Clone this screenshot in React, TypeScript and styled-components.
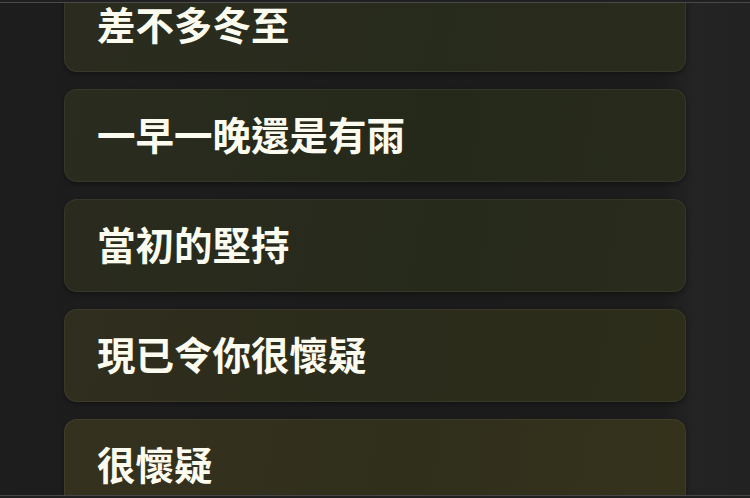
import React from 'react';
import styled, { createGlobalStyle } from 'styled-components';

const GlobalStyle = createGlobalStyle`
  html, body {
    margin: 0;
    padding: 0;
    background: #1c1c1c;
  }
  * {
    box-sizing: border-box;
  }
`;

type Tone = 'olive' | 'green' | 'moss' | 'khaki' | 'brown';

const tones: Record<Tone, string> = {
  olive: 'linear-gradient(100deg, #2b2c1f 0%, #272b1c 60%, #292b1d 100%)',
  green: 'linear-gradient(100deg, #292c1e 0%, #25291a 60%, #282b1c 100%)',
  moss: 'linear-gradient(100deg, #2a2b1e 0%, #262a1b 60%, #292b1c 100%)',
  khaki: 'linear-gradient(100deg, #302e1e 0%, #2b2c1b 55%, #2d2d1a 100%)',
  brown: 'linear-gradient(100deg, #35311f 0%, #302f1c 55%, #35321c 100%)',
};

const lines: { text: string; tone: Tone }[] = [
  { text: '差不多冬至', tone: 'olive' },
  { text: '一早一晚還是有雨', tone: 'green' },
  { text: '當初的堅持', tone: 'moss' },
  { text: '現已令你很懷疑', tone: 'khaki' },
  { text: '很懷疑', tone: 'brown' },
];

const App = () => {
  return (
    <>
      <GlobalStyle />
      <Page>
        <Frame>
          <List>
            {lines.map((l) => (
              <Card key={l.text} tone={l.tone}>
                <Lyric>{l.text}</Lyric>
              </Card>
            ))}
          </List>
        </Frame>
      </Page>
    </>
  );
};
export default App;

const Page = styled.div`
  width: 750px;
  height: 498px;
  padding-top: 2px;
  background: #202020;
  overflow: hidden;
`;

const Frame = styled.div`
  height: 494px;
  border-top: 1px solid #4a4a4a;
  border-bottom: 1px solid #454545;
  background: linear-gradient(90deg, #1d1d1d 0%, #1b1b1b 50%, #1c1c1c 88%, #242424 93%, #222222 100%);
  overflow: hidden;
`;

const List = styled.div`
  display: flex;
  flex-direction: column;
  gap: 17px;
  padding: 0 64px;
  margin-top: -24px;
`;

const Card = styled.div<{ tone: Tone }>`
  height: 93px;
  width: 622px;
  flex-shrink: 0;
  display: flex;
  align-items: center;
  padding-left: 32px;
  border-radius: 13px;
  border: 1px solid rgba(190, 190, 140, 0.09);
  background: ${(p) => tones[p.tone]};
  box-shadow: 0 2px 4px rgba(0, 0, 0, 0.35);
`;

const Lyric = styled.span`
  font-family: 'Noto Sans CJK TC', 'Noto Sans CJK SC', sans-serif;
  font-weight: 700;
  font-size: 38.5px;
  line-height: 1;
  color: #fbfbef;
  margin-top: -4px;
`;
